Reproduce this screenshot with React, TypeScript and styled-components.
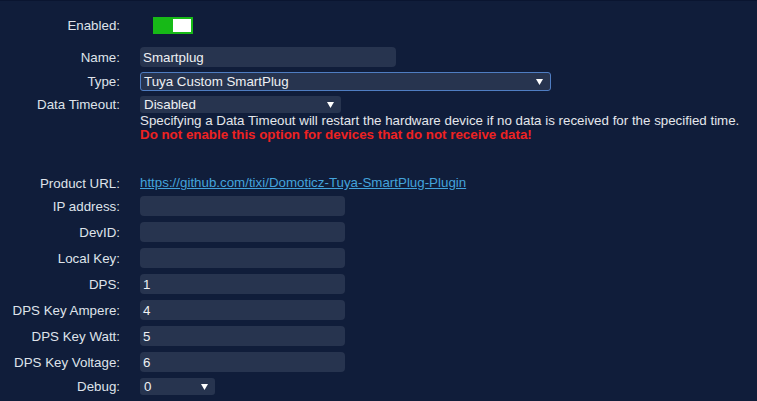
import React from 'react';
import styled, { createGlobalStyle } from 'styled-components';

const GlobalStyle = createGlobalStyle`
  html, body {
    margin: 0;
    padding: 0;
    background: #101d3a;
  }
  body {
    font-family: 'Liberation Sans', Arial, sans-serif;
    font-size: 13.33px;
    color: #dfe3ea;
  }
`;

const Page = styled.div`
  width: 757px;
  height: 401px;
  box-sizing: border-box;
  border-top: 1px solid #0a1530;
  padding-top: 16px;
  overflow: hidden;
`;

const Row = styled.div<{ $top: number; $align?: string }>`
  display: flex;
  align-items: ${p => p.$align || 'center'};
  margin-top: ${p => p.$top}px;
`;

const Label = styled.label<{ $h?: number }>`
  width: 120px;
  flex-shrink: 0;
  text-align: right;
  line-height: ${p => (p.$h ? `${p.$h}px` : 'normal')};
  color: #dfe3ea;
`;

const Control = styled.div<{ $indent?: number }>`
  margin-left: ${p => 20 + (p.$indent || 0)}px;
  display: flex;
  flex-direction: column;
`;

const Switch = styled.div`
  width: 40px;
  height: 17px;
  box-sizing: border-box;
  background: #17b917;
  padding: 2px 2px 2px 20px;
`;

const Knob = styled.div`
  width: 18px;
  height: 13px;
  background: #ffffff;
`;

const TextInput = styled.div<{ $w: number }>`
  width: ${p => p.$w}px;
  height: 20px;
  box-sizing: border-box;
  background: #27344f;
  border-radius: 4px;
  padding: 0 3px;
  line-height: 21px;
  color: #eef0f3;
`;

const SelectBox = styled.div<{ $w: number; $h: number; $focused?: boolean }>`
  position: relative;
  width: ${p => p.$w}px;
  height: ${p => p.$h}px;
  box-sizing: border-box;
  background: #27344f;
  border-radius: 3px;
  border: ${p => (p.$focused ? '1px solid #4f7dc2' : 'none')};
  padding: 0 ${p => (p.$focused ? 3 : 4)}px;
  line-height: ${p => p.$h - (p.$focused ? 2 : 0)}px;
  color: #eef0f3;
`;

const Arrow = styled.svg`
  position: absolute;
  right: 7px;
  top: 50%;
  margin-top: -3px;
`;

const Help = styled.div`
  margin-top: 1px;
  line-height: 14px;
  color: #e4e7ec;
  white-space: nowrap;
`;

const Warning = styled.div`
  line-height: 14px;
  color: #ee2222;
  font-weight: bold;
  white-space: nowrap;
`;

const Link = styled.a`
  color: #43a3dc;
  text-decoration: underline;
  line-height: 16px;
`;

const Select = ({ value, w, h, focused }: { value: string; w: number; h: number; focused?: boolean }) => (
  <SelectBox $w={w} $h={h} $focused={focused}>
    {value}
    <Arrow width="7" height="6" viewBox="0 0 7 6">
      <polygon points="0,0 7,0 3.5,6" fill="#ffffff" />
    </Arrow>
  </SelectBox>
);

const fields = [
  { label: 'IP address:', value: '' },
  { label: 'DevID:', value: '' },
  { label: 'Local Key:', value: '' },
  { label: 'DPS:', value: '1' },
  { label: 'DPS Key Ampere:', value: '4' },
  { label: 'DPS Key Watt:', value: '5' },
  { label: 'DPS Key Voltage:', value: '6' },
];

export default function App() {
  return (
    <>
      <GlobalStyle />
      <Page>
        <Row $top={0}>
          <Label>Enabled:</Label>
          <Control $indent={13}>
            <Switch>
              <Knob />
            </Switch>
          </Control>
        </Row>
        <Row $top={13}>
          <Label>Name:</Label>
          <Control>
            <TextInput $w={256}>Smartplug</TextInput>
          </Control>
        </Row>
        <Row $top={5}>
          <Label>Type:</Label>
          <Control>
            <Select value="Tuya Custom SmartPlug" w={411} h={19} focused />
          </Control>
        </Row>
        <Row $top={5} $align="flex-start">
          <Label $h={17}>Data Timeout:</Label>
          <Control>
            <Select value="Disabled" w={201} h={17} />
            <Help>
              Specifying a Data Timeout will restart the hardware device if no data is received for the specified time.
            </Help>
            <Warning>Do not enable this option for devices that do not receive data!</Warning>
          </Control>
        </Row>
        <Row $top={33}>
          <Label>Product URL:</Label>
          <Control>
            <Link href="#">https://github.com/tixi/Domoticz-Tuya-SmartPlug-Plugin</Link>
          </Control>
        </Row>
        {fields.map((f, i) => (
          <Row key={f.label} $top={i === 0 ? 5 : 6}>
            <Label>{f.label}</Label>
            <Control>
              <TextInput $w={205}>{f.value}</TextInput>
            </Control>
          </Row>
        ))}
        <Row $top={6}>
          <Label>Debug:</Label>
          <Control>
            <Select value="0" w={75} h={17} />
          </Control>
        </Row>
      </Page>
    </>
  );
}
